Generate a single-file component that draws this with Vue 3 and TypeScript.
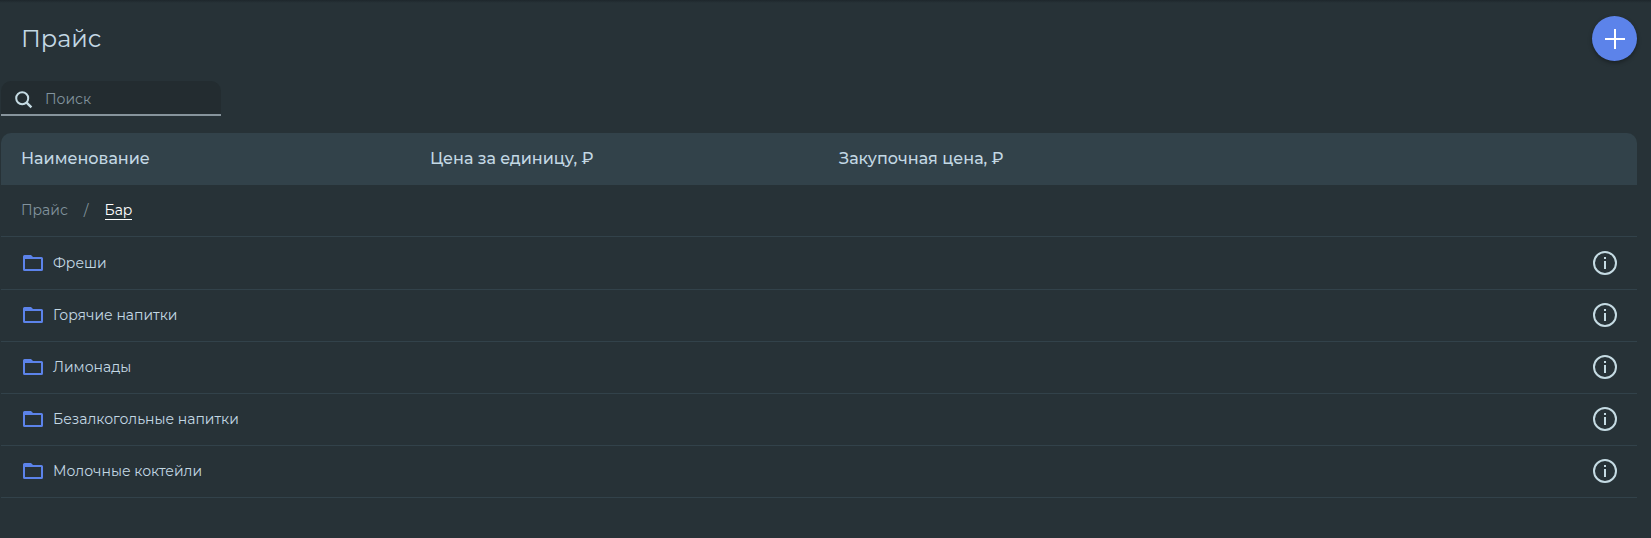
<script setup lang="ts">
interface Item {
  id: string
  name: string
}

const columns: Item[] = [
  { id: 'name', name: 'Наименование' },
  { id: 'price', name: 'Цена за единицу, ₽' },
  { id: 'cost', name: 'Закупочная цена, ₽' },
]

const folders: Item[] = [
  { id: 'fresh', name: 'Фреши' },
  { id: 'hot', name: 'Горячие напитки' },
  { id: 'lemonade', name: 'Лимонады' },
  { id: 'soft', name: 'Безалкогольные напитки' },
  { id: 'milk', name: 'Молочные коктейли' },
]
</script>

<template>
  <main class="page">
    <header class="top">
      <h1>Прайс</h1>
      <button class="add" aria-label="Добавить">
        <svg width="20" height="20" viewBox="0 0 20 20"><path d="M10 0v20M0 10h20" stroke="#fff" stroke-width="2" /></svg>
      </button>
    </header>

    <label class="search">
      <svg width="18" height="18" viewBox="0 0 18 18" fill="none" stroke="#c5dbe3">
        <circle cx="7.2" cy="7.2" r="6" stroke-width="2" />
        <path d="M11.6 11.6 16.4 16.4" stroke-width="2.4" />
      </svg>
      <input type="text" placeholder="Поиск" />
    </label>

    <section class="table">
      <div class="head">
        <div v-for="c in columns" :key="c.id" class="cell">{{ c.name }}</div>
        <div class="cell"></div>
      </div>
      <nav class="crumbs">
        <a>Прайс</a><span class="slash">/</span><a class="current">Бар</a>
      </nav>
      <div v-for="f in folders" :key="f.id" class="row">
        <svg class="folder" width="20" height="16" viewBox="0 0 20 16">
          <path fill="#5c83ea" fill-rule="evenodd" d="M1.500 0H8l2 2h8.500a1.500 1.500 0 0 1 1.500 1.500v11a1.500 1.500 0 0 1-1.500 1.500h-17A1.500 1.500 0 0 1 0 14.500v-13A1.500 1.500 0 0 1 1.500 0ZM2 4v10h16V4Z" />
        </svg>
        <span class="label">{{ f.name }}</span>
        <svg class="info" width="24" height="24" viewBox="0 0 24 24">
          <circle cx="12" cy="12" r="11" fill="none" stroke="#c5dbe3" stroke-width="2" />
          <path d="M11 6h2v2h-2zM11 10h2v8h-2z" fill="#c5dbe3" />
        </svg>
      </div>
    </section>
  </main>
</template>

<style>
body {
  margin: 0;
  background: #273237;
}
</style>

<style scoped>
.page {
  box-sizing: border-box;
  height: 538px;
  padding: 0 14px 0 1px;
  overflow: hidden;
  background: linear-gradient(#1e272c, #273237 3px);
  color: #c3d8e4;
  font-family: Montserrat, Inter, "Noto Sans", sans-serif;
  font-size: 14px;
}
.top {
  display: flex;
  justify-content: space-between;
  height: 81px;
  padding-left: 20px;
}
h1 {
  margin: 23px 0 0;
  font-size: 24px;
  font-weight: 400;
  line-height: 32px;
}
.add {
  display: flex;
  align-items: center;
  justify-content: center;
  width: 45px;
  height: 45px;
  margin-top: 16px;
  padding: 0 0 0 1px;
  border: 0;
  border-radius: 50%;
  background: #5c83ea;
  box-shadow: 0 2px 4px rgba(0, 0, 0, 0.35);
}
.search {
  display: flex;
  align-items: center;
  box-sizing: border-box;
  width: 220px;
  height: 35px;
  padding-left: 14px;
  border-bottom: 2px solid #87949c;
  border-radius: 10px 10px 0 0;
  background: #232c30;
}
.search svg {
  margin-top: 4px;
}
input {
  width: 150px;
  margin: 2px 0 0 12px;
  padding: 0;
  border: 0;
  outline: 0;
  background: transparent;
  color: #c3d8e4;
  font: inherit;
}
input::placeholder {
  color: #82939d;
  opacity: 1;
}
.table {
  margin-top: 17px;
}
.head {
  display: grid;
  grid-template-columns: repeat(4, 1fr);
  align-items: center;
  height: 52px;
  border-radius: 10px 10px 0 0;
  background: #32424a;
  font-size: 16px;
  font-weight: 500;
}
.cell {
  padding: 0 0 1px 20px;
}
.crumbs,
.row {
  display: flex;
  align-items: center;
  box-sizing: border-box;
  height: 52px;
  padding: 0 20px 2px;
  border-bottom: 1px solid #32424a;
}
.crumbs {
  color: #82939d;
}
.slash {
  margin: 0 16px;
}
.current {
  margin-top: 1px;
  border-bottom: 1px solid #fff;
  color: #fff;
  line-height: 18px;
}
.crumbs + .row {
  height: 53px;
}
.crumbs + .row .label {
  margin-top: 1px;
}
.folder {
  margin: 1px 10px 0 2px;
}
.info {
  margin: 1px 0 0 auto;
}
</style>
